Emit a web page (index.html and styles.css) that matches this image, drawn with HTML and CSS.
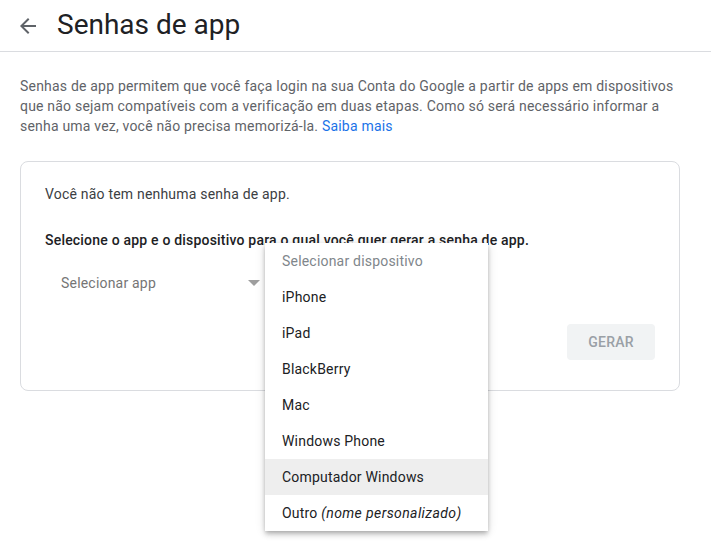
FILE: index.html
```html
<!DOCTYPE html>
<html>
  <head>
    <meta charset="UTF-8" />
    <meta name="viewport" content="width=device-width, initial-scale=1.0" />
    <title>Senhas de app</title>
    <link rel="stylesheet" href="styles.css">
  </head>
  <body>
    <header class="top-bar">
      <svg class="back-icon" width="24" height="24" viewBox="0 0 24 24">
        <path d="M20 11H7.83l5.59-5.59L12 4l-8 8 8 8 1.41-1.41L7.83 13H20v-2z" fill="#5f6368"/>
      </svg>
      <h1>Senhas de app</h1>
    </header>

    <div class="content">
      <p class="intro">
        Senhas de app permitem que você faça login na sua Conta do Google a partir de apps em dispositivos
        que não sejam compatíveis com a verificação em duas etapas. Como só será necessário informar a
        senha uma vez, você não precisa memorizá-la. <a href="#">Saiba mais</a>
      </p>

      <div class="card">
        <p class="empty">Você não tem nenhuma senha de app.</p>
        <p class="hint">Selecione o app e o dispositivo para o qual você quer gerar a senha de app.</p>

        <div class="select-row">
          <div class="select">
            <span>Selecionar app</span>
            <span class="caret"></span>
          </div>

          <ul class="menu">
            <li class="placeholder">Selecionar dispositivo</li>
            <li>iPhone</li>
            <li>iPad</li>
            <li>BlackBerry</li>
            <li>Mac</li>
            <li>Windows Phone</li>
            <li class="active">Computador Windows</li>
            <li>Outro <em>(nome personalizado)</em></li>
          </ul>
        </div>

        <div class="actions">
          <button class="generate" disabled>GERAR</button>
        </div>
      </div>
    </div>
  </body>
</html>
```

FILE: styles.css
```css
* {
  box-sizing: border-box;
  margin: 0;
  padding: 0;
}

html,
body {
  min-height: 100%;
  height: 100%;
}

body {
  background-color: #fff;
  font-family: Roboto, Arial, sans-serif;
  letter-spacing: 0.2px;
  color: #202124;
}

.top-bar {
  display: flex;
  align-items: center;
  height: 52px;
  padding-left: 16px;
  border-bottom: 1px solid #dadce0;
}

.back-icon {
  margin-right: 17px;
}

.top-bar h1 {
  font-size: 28px;
  font-weight: 400;
  letter-spacing: 0;
  color: #202124;
  margin-top: -3px;
}

.content {
  padding: 0 20px;
  width: 700px;
}

.intro {
  margin-top: 24px;
  font-size: 14px;
  line-height: 20px;
  color: #5f6368;
}

.intro a {
  color: #1a73e8;
  text-decoration: none;
}

.card {
  margin-top: 25px;
  width: 660px;
  border: 1px solid #dadce0;
  border-radius: 8px;
  padding: 22px 24px 30px 24px;
}

.empty {
  font-size: 14px;
  line-height: 20px;
  color: #3c4043;
}

.hint {
  margin-top: 26px;
  font-size: 14px;
  line-height: 20px;
  font-weight: 500;
  color: #202124;
}

.select-row {
  position: relative;
  margin-top: 9px;
  height: 48px;
}

.select {
  display: flex;
  align-items: center;
  justify-content: space-between;
  width: 220px;
  height: 48px;
  padding: 0 5px 0 16px;
  font-size: 14px;
  color: #757575;
}

.caret {
  width: 0;
  height: 0;
  border-left: 6px solid transparent;
  border-right: 6px solid transparent;
  border-top: 6px solid #9e9e9e;
}

.menu {
  position: absolute;
  left: 220px;
  top: -16px;
  width: 223px;
  list-style: none;
  background-color: #fff;
  box-shadow: 0 2px 4px -1px rgba(0, 0, 0, 0.2), 0 4px 5px 0 rgba(0, 0, 0, 0.14), 0 1px 10px 0 rgba(0, 0, 0, 0.12);
  z-index: 2;
}

.menu li {
  height: 36px;
  line-height: 36px;
  padding-left: 17px;
  font-size: 14px;
  color: #202124;
}

.menu li em {
  letter-spacing: 0.4px;
}

.menu li.placeholder {
  color: #80868b;
}

.menu li.active {
  background-color: #eeeeee;
}

.actions {
  display: flex;
  justify-content: flex-end;
  margin-top: 17px;
}

.generate {
  width: 88px;
  height: 36px;
  border: none;
  border-radius: 4px;
  background-color: #f1f3f4;
  color: #9aa0a6;
  font-family: Roboto, Arial, sans-serif;
  font-size: 14px;
  font-weight: 500;
  letter-spacing: 0.25px;
}
```
